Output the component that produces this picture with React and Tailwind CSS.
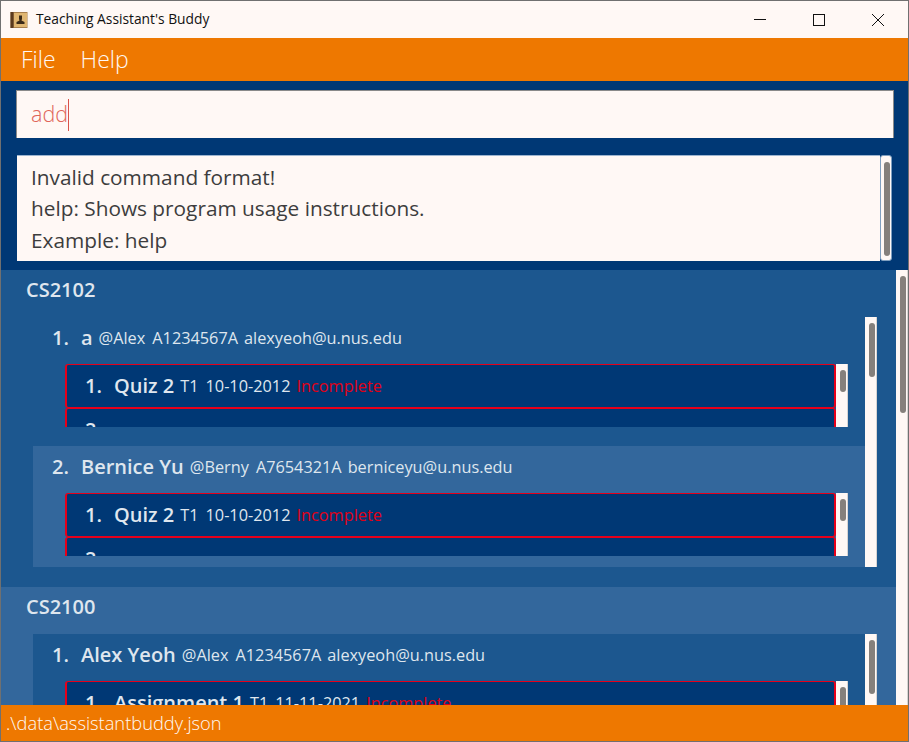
const modules = [
  {
    code: 'CS2102',
    bg: 'bg-[#1c578f]',
    students: [
      { name: 'a', tag: '@Alex', id: 'A1234567A', email: 'alexyeoh@u.nus.edu', task: 'Quiz 2', week: 'T1', date: '10-10-2012' },
      { name: 'Bernice Yu', tag: '@Berny', id: 'A7654321A', email: 'berniceyu@u.nus.edu', task: 'Quiz 2', week: 'T1', date: '10-10-2012' },
    ],
  },
  {
    code: 'CS2100',
    bg: 'bg-[#33679c]',
    students: [
      { name: 'Alex Yeoh', tag: '@Alex', id: 'A1234567A', email: 'alexyeoh@u.nus.edu', task: 'Assignment 1', week: 'T1', date: '11-11-2021' },
    ],
  },
]

function AppIcon() {
  return (
    <svg width="18" height="18" viewBox="0 0 18 18" className="shrink-0">
      <rect x="0.5" y="1" width="17" height="16" fill="#a87f4c" />
      <rect x="0.5" y="1" width="3" height="16" fill="#5b3a1e" />
      <rect x="4" y="2" width="13" height="14" fill="#e0b672" />
      <path d="M9 4.500h3v3.500l-0.500 1.500 3 1.500v2h-8v-2l3-1.500-0.500-1.500z" fill="#3b2a18" />
    </svg>
  )
}

function WindowControls() {
  return (
    <div className="flex items-center h-full">
      <svg width="14" height="14" viewBox="0 0 14 14" className="mr-[45px]">
        <path d="M1 6.5h12" stroke="#111" strokeWidth="1" />
      </svg>
      <svg width="14" height="14" viewBox="0 0 14 14" className="mr-[45px]">
        <rect x="1.5" y="1.5" width="11" height="11" fill="none" stroke="#111" strokeWidth="1" />
      </svg>
      <svg width="14" height="14" viewBox="0 0 14 14" className="mr-[23px]">
        <path d="M1 1l12 12M13 1L1 13" stroke="#111" strokeWidth="1" />
      </svg>
    </div>
  )
}

function ScrollBar({ thumb }) {
  return (
    <div className="w-[12px] shrink-0 bg-[#fff8f5] overflow-hidden border-r border-[#d8d4d2]">
      <div className={`mt-[6px] ml-[4px] w-[6px] rounded-full bg-[#85807c] ${thumb}`} />
    </div>
  )
}

function TaskCard({ index, task, week, date }) {
  return (
    <div className="h-[44px] shrink-0 flex items-center pl-[18px] bg-[#003875] border-y border-x-2 border-[#e6001a] rounded-[3px] text-[#dfe6ee]">
      <span className="w-[29px] text-[20px] font-semibold">{index}.</span>
      {task && (
        <>
          <span className="text-[20px] font-semibold mr-[6px]">{task}</span>
          <span className="text-[16.3px] mr-[7px]">{week}</span>
          <span className="text-[16.3px] mr-[6px]">{date}</span>
          <span className="text-[16.3px] text-[#e00016]">Incomplete</span>
        </>
      )}
    </div>
  )
}

function StudentCard({ index, student, light }) {
  return (
    <div className={`shrink-0 pl-[19px] pr-[17px] ${light ? 'h-[121px] bg-[#33679c]' : 'h-[120px] bg-[#1c578f]'}`}>
      <div className="h-[47px] flex items-center text-[#dfe6ee] pb-[5px]">
        <span className="w-[29px] text-[20px] font-semibold">{index}.</span>
        <span className="text-[20px] font-semibold mr-[6px]">{student.name}</span>
        <span className="text-[16.3px] mr-[7px]">{student.tag}</span>
        <span className="text-[16.3px] mr-[6px]">{student.id}</span>
        <span className="text-[16.3px]">{student.email}</span>
      </div>
      <div className="flex h-[63px] ml-[13px] overflow-hidden">
        <div className="flex-1 min-w-0 flex flex-col overflow-hidden">
          <TaskCard index={1} task={student.task} week={student.week} date={student.date} />
          <TaskCard index={2} />
        </div>
        <ScrollBar thumb="h-[22px]" />
      </div>
    </div>
  )
}

function ModuleCard({ module }) {
  return (
    <div className={`shrink-0 h-[317px] ${module.bg}`}>
      <div className="h-[47px] flex items-center pl-[25px] pb-[7px] text-[20px] font-semibold text-[#dfe6ee]">{module.code}</div>
      <div className="flex h-[250px] ml-[32px] mr-[19px]">
        <div className="flex-1 min-w-0 flex flex-col gap-[9px] overflow-hidden">
          {module.students.map((student, i) => (
            <StudentCard key={student.name} index={i + 1} student={student} light={i % 2 === 1} />
          ))}
        </div>
        <ScrollBar thumb="h-[54px]" />
      </div>
    </div>
  )
}

export default function App() {
  return (
    <div className="w-[909px] h-[742px] flex flex-col overflow-hidden border border-[#707070] bg-[#003875] font-['Open_Sans',sans-serif]">
      <div className="h-[37px] shrink-0 flex items-center justify-between bg-[#fff8f5] pl-[9px]">
        <div className="flex items-center gap-[8px]">
          <AppIcon />
          <span className="text-[13.8px] text-[#111]">Teaching Assistant's Buddy</span>
        </div>
        <WindowControls />
      </div>
      <div className="h-[43px] shrink-0 flex items-center gap-[25px] pl-[20px] bg-[#ee7800] text-[23px] font-light text-[#fff8f5]">
        <span>File</span>
        <span>Help</span>
      </div>
      <div className="h-[189px] shrink-0 pt-[9px] pl-[15px] pr-[14px]">
        <div className="h-[48px] flex items-center pl-[14px] bg-[#fff8f5] border-t border-l border-r border-[#8a8a8a] text-[21.5px] font-light text-[#e0655a]">
          add<span className="h-[32px] border-l border-[#d9534a]" />
        </div>
        <div className="flex h-[106px] mt-[17px] ml-px mr-[2px]">
          <div className="flex-1 pl-[14px] pt-[6px] bg-[#fff8f5] border-t border-[#9db5d0] text-[20.8px] leading-[31.4px] text-[#3d3d3d] overflow-hidden">
            <div>Invalid command format!</div>
            <div>help: Shows program usage instructions.</div>
            <div>Example: help</div>
          </div>
          <div className="w-[12px] shrink-0 bg-[#fff8f5] border border-[#7f9fc0] rounded-[3px]">
            <div className="mt-[6px] ml-[3px] w-[6px] h-[94px] rounded-full bg-[#85807c]" />
          </div>
        </div>
      </div>
      <div className="flex-1 min-h-0 flex overflow-hidden">
        <div className="flex-1 min-w-0 flex flex-col overflow-hidden">
          {modules.map((module) => (
            <ModuleCard key={module.code} module={module} />
          ))}
        </div>
        <ScrollBar thumb="h-[137px]" />
      </div>
      <div className="h-[36px] shrink-0 flex items-center pl-[5px] bg-[#ee7800] text-[18.3px] font-light text-[#fff8f5]">
        .\data\assistantbuddy.json
      </div>
    </div>
  )
}
